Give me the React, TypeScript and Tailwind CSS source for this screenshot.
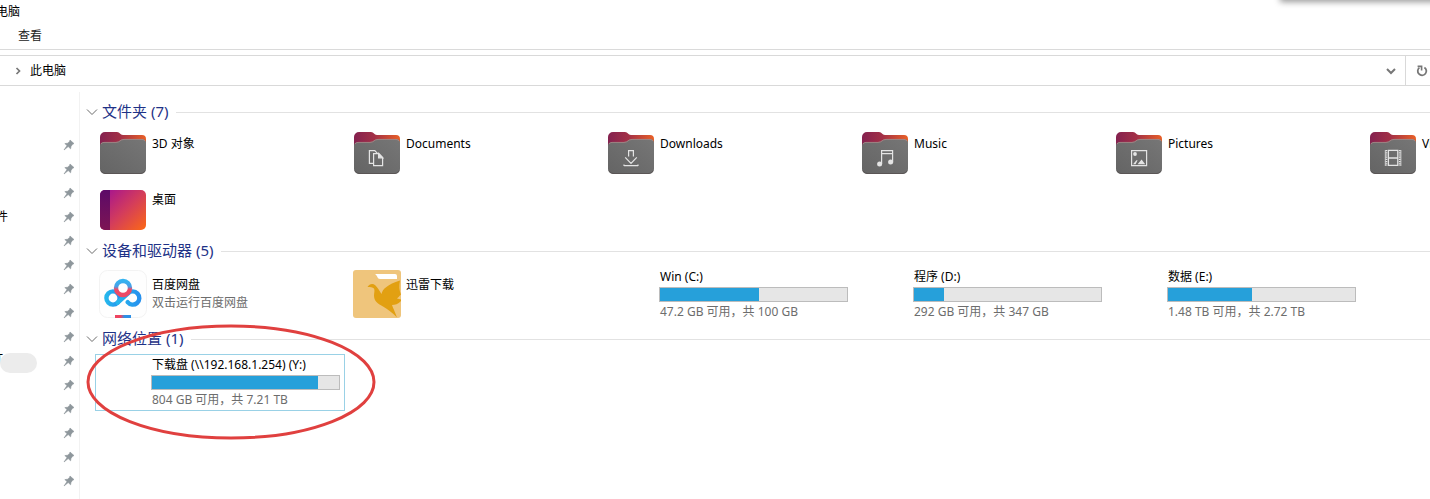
import { useState } from "react";
import type { ReactNode } from "react";

type Glyph = "documents" | "downloads" | "music" | "pictures" | "videos";

type Drive = {
  name: string;
  info: string;
  used: number;
};

const FOLDERS: { name: string; glyph?: Glyph }[] = [
  { name: "3D 对象" },
  { name: "Documents", glyph: "documents" },
  { name: "Downloads", glyph: "downloads" },
  { name: "Music", glyph: "music" },
  { name: "Pictures", glyph: "pictures" },
  { name: "Videos", glyph: "videos" },
];

const DRIVES: Drive[] = [
  { name: "Win (C:)", info: "47.2 GB 可用，共 100 GB", used: 53 },
  { name: "程序 (D:)", info: "292 GB 可用，共 347 GB", used: 16 },
  { name: "数据 (E:)", info: "1.48 TB 可用，共 2.72 TB", used: 45 },
];

const NETWORK_DRIVE: Drive = {
  name: "下载盘 (\\\\192.168.1.254) (Y:)",
  info: "804 GB 可用，共 7.21 TB",
  used: 89,
};

const PINNED = ["", "", "", "文件", "", "", "", "", "", "T", "", "", "", "", ""];

const FolderGlyph = ({ glyph }: { glyph: Glyph }) => {
  switch (glyph) {
    case "documents":
      return (
        <g fill="none" stroke="#e4e4e4" strokeWidth="1.2">
          <path d="M19.6 31.4h-4.2V18.6h5.4l2.6 2.8" />
          <path d="M19.6 21.6h5.2l3.8 4v8H19.6z" />
          <path d="M24.6 21.4v4.4h4.2z" fill="#e4e4e4" />
        </g>
      );
    case "downloads":
      return (
        <path
          d="M20.6 24.500V18.600h4.800v5.900M17.200 25.400l5.800 6 5.800-6M16 34v-1.600M16 33.600h14M30 34v-1.600"
          fill="none"
          stroke="#e4e4e4"
          strokeWidth="1.2"
        />
      );
    case "music":
      return (
        <g fill="#e4e4e4">
          <path d="M19.6 32V18.6h11v12M19.6 21.6h11" fill="none" stroke="#e4e4e4" strokeWidth="1.2" />
          <circle cx="17.6" cy="32" r="2.5" />
          <circle cx="28.6" cy="30" r="2.5" />
        </g>
      );
    case "pictures":
      return (
        <g fill="#e4e4e4">
          <path d="M15.6 18.6h15v15h-15z" fill="none" stroke="#e4e4e4" strokeWidth="1.2" />
          <circle cx="19" cy="22" r="1.9" />
          <path d="M17 32.2l3.4-4h1.2l-2 4zM21.6 32.2l4-4.8 3.6 4.8z" />
        </g>
      );
    case "videos":
      return (
        <g fill="none" stroke="#e4e4e4">
          <path d="M18.4 18.4h9.400v15h-9.400zM18.400 26h9.400" strokeWidth="1.3" />
          <path d="M16.400 18v16M29.800 18v16" strokeWidth="1.800" strokeDasharray="1.200 1" />
          <path d="M15.300 18v16M30.900 18v16" strokeWidth="0.800" />
        </g>
      );
  }
};

const FolderIcon = ({ glyph }: { glyph?: Glyph }) => (
  <svg viewBox="0 0 46 42" className="mt-px ml-px h-[42px] w-[46px]" aria-hidden="true">
    <defs>
      <linearGradient id="folder-back" x1="0" x2="1" y1="0" y2="0">
        <stop offset="0" stopColor="#84214f" />
        <stop offset="0.45" stopColor="#a33046" />
        <stop offset="1" stopColor="#e96027" />
      </linearGradient>
      <linearGradient id="folder-front" x1="0" x2="1" y1="1" y2="0">
        <stop offset="0" stopColor="#646464" />
        <stop offset="1" stopColor="#767676" />
      </linearGradient>
    </defs>
    <path d="M0 5a5 5 0 0 1 5-5h12c3 0 3 3 6 3h19a4 4 0 0 1 4 4v14H0z" fill="url(#folder-back)" />
    <path
      d="M0 14a4 4 0 0 1 4-4h12c4 0 4-3 8-3h18a4 4 0 0 1 4 4v26a5 5 0 0 1-5 5H5a5 5 0 0 1-5-5z"
      fill="url(#folder-front)"
    />
    <path d="M1 12a4 4 0 0 1 3-1.6h12c4 0 4-3 8-3h18a4 4 0 0 1 3 1.6" fill="none" stroke="#b58d8c" strokeWidth="0.7" />
    <path d="M1 38.6a4.5 4.5 0 0 0 4 2.9h36a4.5 4.5 0 0 0 4-2.9" fill="none" stroke="#575050" strokeWidth="0.8" />
    {glyph && <FolderGlyph glyph={glyph} />}
  </svg>
);

const DesktopIcon = () => (
  <svg viewBox="0 0 46 40" className="mt-[3px] ml-px h-10 w-[46px]" aria-hidden="true">
    <defs>
      <linearGradient id="desktop-bg" x1="0.1" x2="1" y1="0.1" y2="0.9">
        <stop offset="0" stopColor="#a8168d" />
        <stop offset="0.5" stopColor="#d33c5c" />
        <stop offset="1" stopColor="#f8641c" />
      </linearGradient>
      <linearGradient id="desktop-dock" x1="0" x2="0" y1="0" y2="1">
        <stop offset="0" stopColor="#5c0a68" />
        <stop offset="1" stopColor="#7d1554" />
      </linearGradient>
    </defs>
    <rect width="46" height="40" rx="5" fill="url(#desktop-bg)" />
    <path d="M10 0H5a5 5 0 0 0-5 5v30a5 5 0 0 0 5 5h5z" fill="url(#desktop-dock)" />
  </svg>
);

const NetdiskIcon = () => (
  <svg viewBox="0 0 48 48" className="size-12" aria-hidden="true">
    <defs>
      <linearGradient id="netdisk-top" x1="0" x2="0" y1="0" y2="1">
        <stop offset="0" stopColor="#35b3f0" />
        <stop offset="0.4" stopColor="#4a9ee6" />
        <stop offset="0.6" stopColor="#ee4a66" />
        <stop offset="1" stopColor="#ee4a66" />
      </linearGradient>
      <linearGradient id="netdisk-side" x1="0" x2="1" y1="0" y2="0">
        <stop offset="0" stopColor="#25b6ec" />
        <stop offset="1" stopColor="#2691ee" />
      </linearGradient>
      <linearGradient id="netdisk-bar" x1="0" x2="1" y1="0" y2="0">
        <stop offset="0.35" stopColor="#ee4460" />
        <stop offset="0.6" stopColor="#2c8fe6" />
      </linearGradient>
    </defs>
    <rect x="0.5" y="0.5" width="47" height="47" rx="8" fill="#fefefe" stroke="#f3f3f3" />
    <g fill="none" strokeWidth="4.4">
      <circle cx="14" cy="28" r="6.6" stroke="url(#netdisk-side)" />
      <path
        d="M18.7 32.700L29 23.400a6.600 6.600 0 1 1-0.400 8.800"
        stroke="url(#netdisk-side)"
        strokeLinecap="round"
      />
      <circle cx="24" cy="18" r="7" fill="#fefefe" stroke="url(#netdisk-top)" />
    </g>
    <rect x="16" y="45" width="16" height="3" fill="url(#netdisk-bar)" />
  </svg>
);

const ThunderIcon = () => (
  <svg viewBox="0 0 48 48" className="size-12" aria-hidden="true">
    <rect width="48" height="48" rx="3" fill="#efc57c" />
    <path d="M22 4h20a2 2 0 0 1 2 2v3H27c-3 0-2-3-5-5z" fill="#fff" />
    <path
      d="M14.5 17c2-3 5-4 8-1.500 2.500 2.500 4 5.500 6 8.500 1-5 6-9.500 18.500-13.500-1 5-1 10 1 14-2 2-3 3-4 4l4 1v1.500c-3 3-6 4-9 4 1 3 3 7 5 12.500-5-5-9-8-14-11-6-3-9-6-9-11 0-3 1-5 0-7-1.500-1.500-3.500-1.500-6.500-1.500z"
      fill="#e2a012"
    />
  </svg>
);

const PinIcon = () => (
  <svg viewBox="0 0 12 12" className="size-3" aria-hidden="true">
    <path
      d="M7 1l4 3.6-1.4.6L8 7.4l-.4 2.4L5.2 7.6 1 11l3-4.400L1.800 4.600l2.800-.4L6.600 2.400z"
      fill="#8e979c"
      stroke="#8e979c"
      strokeWidth="0.6"
    />
  </svg>
);

const Tile = ({ icon, selected, children }: { icon?: ReactNode; selected?: boolean; children: ReactNode }) => (
  <button
    type="button"
    className={`flex items-start border pl-[3px] text-left ${
      selected ? "h-[57px] border-[#99d1e6]" : "h-14 border-transparent"
    }`}
  >
    <span className="w-[52px] shrink-0 pt-[3px]">{icon}</span>
    {children}
  </button>
);

const DriveInfo = ({ drive }: { drive: Drive }) => (
  <span className="flex min-w-0 grow flex-col">
    <span className="h-5 pl-px leading-5 whitespace-nowrap text-black">{drive.name}</span>
    <span className="flex h-[15px] w-[189px] border border-[#bcbcbc] bg-[#e6e6e6]">
      <span className="bg-[#26a0da]" style={{ width: `${drive.used}%` }}></span>
    </span>
    <span className="h-5 pl-px leading-5 whitespace-nowrap text-[#6d6d6d]">{drive.info}</span>
  </span>
);

const Section = ({ title, children }: { title: string; children: ReactNode }) => {
  const [open, setOpen] = useState(true);

  return (
    <section>
      <h2 className="flex h-6 items-center gap-2">
        <button
          type="button"
          className="flex items-center gap-1 text-[15px] whitespace-nowrap text-[#1e3287]"
          aria-expanded={open}
          onClick={() => setOpen(!open)}
        >
          <svg viewBox="0 0 12 8" className={`h-2 w-3 ${open ? "" : "-rotate-90"}`} aria-hidden="true">
            <path d="M1 1.5l5 5 5-5" fill="none" stroke="#6b6b6b" />
          </svg>
          <span className="pb-[2px] leading-[22px]">{title}</span>
        </button>
        <span className="h-px grow bg-[#e2e2e2]"></span>
      </h2>
      {open && (
        <div className="grid grid-cols-[repeat(6,250px)] gap-x-1 pt-[3px] pl-[9px]">{children}</div>
      )}
    </section>
  );
};

const App = () => {
  return (
    <div className="relative flex min-h-screen flex-col overflow-hidden bg-white font-['Noto_Sans','Noto_Sans_CJK_SC',sans-serif] text-[12px] text-black">
      <div className="absolute -top-2 -right-2 h-2 w-[156px] shadow-[0_0_6px_2px_rgba(0,0,0,0.4)]"></div>

      <header>
        <h1 className="-ml-4 h-6 leading-6">此电脑</h1>
        <nav className="flex h-[26px] border-b border-[#dadada] pl-[18px]">
          <button type="button" className="h-6 leading-6 text-[#222]">
            查看
          </button>
        </nav>
        <div className="mt-[5px] flex h-[31px] items-stretch border-y border-[#d9d9d9]">
          <div className="flex grow items-center gap-2 pl-[15px]">
            <svg viewBox="0 0 7 8" className="h-2 w-[7px]" aria-hidden="true">
              <path d="M1.5 1l3 3-3 3" fill="none" stroke="#777" strokeWidth="1.7" />
            </svg>
            <a href="#this-pc">此电脑</a>
          </div>
          <button type="button" aria-label="历史记录" className="flex w-7 items-center justify-center">
            <svg viewBox="0 0 10 8" className="h-2 w-[10px]" aria-hidden="true">
              <path d="M1 2l4 4 4-4" fill="none" stroke="#777" strokeWidth="2" />
            </svg>
          </button>
          <button
            type="button"
            aria-label="刷新"
            className="flex w-[25px] items-center justify-end border-l border-[#d9d9d9] pr-[2px]"
          >
            <svg viewBox="0 0 12 12" className="size-3" aria-hidden="true">
              <path d="M8.4 2.4a4.300 4.300 0 1 1-5 .2" fill="none" stroke="#777" strokeWidth="1.8" />
              <path d="M1.600 1.400h4v4" fill="none" stroke="#777" strokeWidth="1.6" />
            </svg>
          </button>
        </div>
      </header>

      <div className="flex grow">
        <aside className="mt-[6px] w-20 shrink-0 border-r border-[#f2f2f2] pt-[41px]">
          <ul>
            {PINNED.map((label, i) => (
              <li key={i} className="flex h-6 items-center justify-between pr-1">
                {label === "T" ? (
                  <span className="-ml-1 flex items-start">
                    <span className="leading-5">{label}</span>
                    <span className="-ml-[3px] mt-1 h-5 w-[37px] rounded-full bg-[#ececec]"></span>
                  </span>
                ) : (
                  <span className="-ml-4">{label}</span>
                )}
                <PinIcon />
              </li>
            ))}
          </ul>
        </aside>

        <main className="min-w-0 grow overflow-hidden pt-[14px] pl-[6px]">
          <Section title="文件夹 (7)">
            {FOLDERS.map((folder) => (
              <Tile key={folder.name} icon={<FolderIcon glyph={folder.glyph} />}>
                <span className="pt-[6px] pl-px leading-5 whitespace-nowrap">{folder.name}</span>
              </Tile>
            ))}
            <Tile icon={<DesktopIcon />}>
              <span className="pt-[6px] pl-px leading-5">桌面</span>
            </Tile>
          </Section>

          <div className="mb-[5px]">
            <Section title="设备和驱动器 (5)">
              <Tile icon={<NetdiskIcon />}>
                <span className="flex flex-col pt-[9px] pl-px leading-[18px]">
                  <span>百度网盘</span>
                  <span className="text-[#6d6d6d]">双击运行百度网盘</span>
                </span>
              </Tile>
              <Tile icon={<ThunderIcon />}>
                <span className="pt-[9px] pl-px leading-[18px]">迅雷下载</span>
              </Tile>
              {DRIVES.map((drive) => (
                <Tile key={drive.name}>
                  <DriveInfo drive={drive} />
                </Tile>
              ))}
            </Section>
          </div>

          <div className="relative">
            <Section title="网络位置 (1)">
              <Tile selected>
                <DriveInfo drive={NETWORK_DRIVE} />
              </Tile>
            </Section>
            <svg
              viewBox="0 0 290 118"
              className="pointer-events-none absolute -top-1 left-0 h-[118px] w-[290px]"
              aria-hidden="true"
            >
              <ellipse cx="145" cy="59" rx="143" ry="56" fill="none" stroke="#e0403f" strokeWidth="3" />
            </svg>
          </div>
        </main>
      </div>
    </div>
  );
};

export default App;
